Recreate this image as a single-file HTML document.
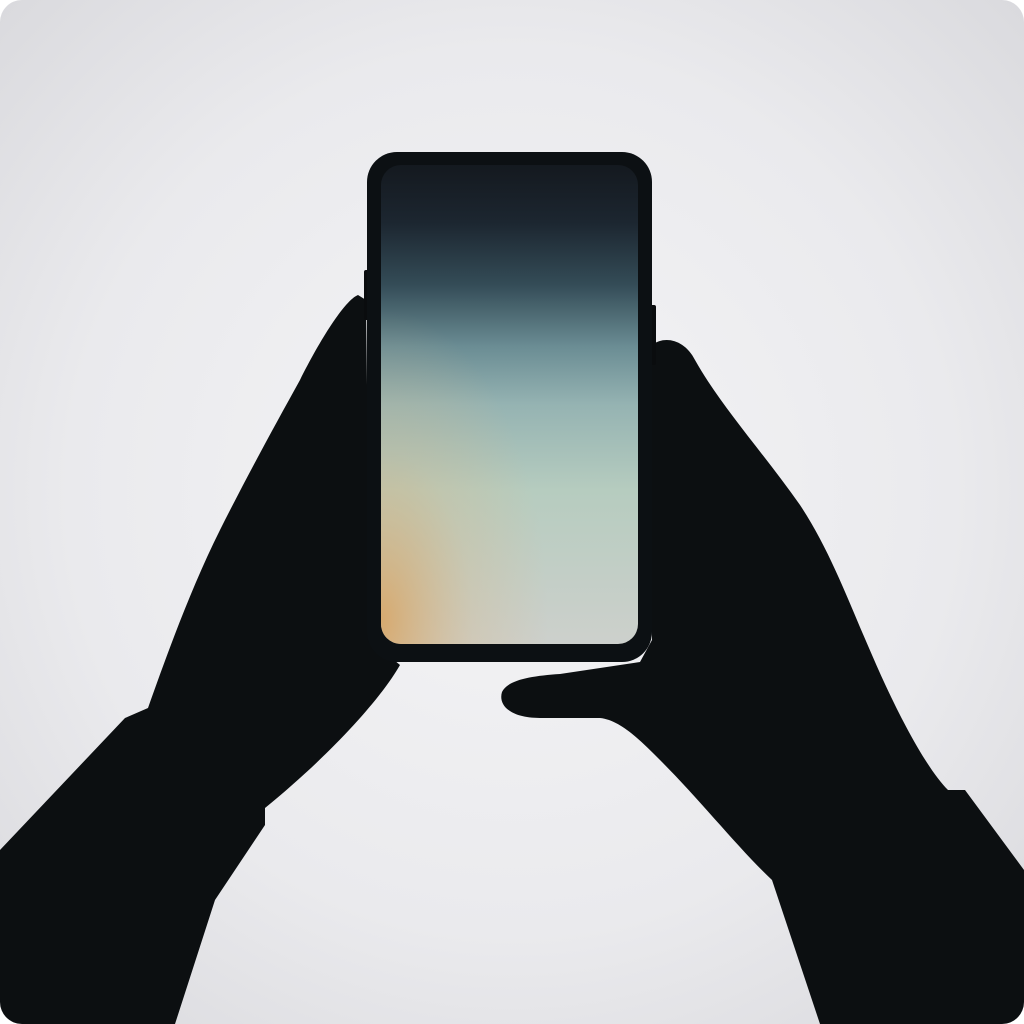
<!DOCTYPE html>
<html><head><meta charset="utf-8"><style>
html,body{margin:0;padding:0;background:#fff;}
svg{display:block}
</style></head><body>
<svg width="1024" height="1024" viewBox="0 0 1024 1024" xmlns="http://www.w3.org/2000/svg">
<defs>
<radialGradient id="bg" cx="50%" cy="48%" r="72%">
<stop offset="0" stop-color="#f4f4f6"/>
<stop offset="0.6" stop-color="#eaeaed"/>
<stop offset="1" stop-color="#d8d8dc"/>
</radialGradient>
<linearGradient id="scr" x1="0" y1="0" x2="0" y2="1">
<stop offset="0" stop-color="#14191f"/>
<stop offset="0.12" stop-color="#1c2630"/>
<stop offset="0.25" stop-color="#344c57"/>
<stop offset="0.38" stop-color="#6b8d94"/>
<stop offset="0.5" stop-color="#95b3b2"/>
<stop offset="0.68" stop-color="#b6ccbf"/>
<stop offset="1" stop-color="#cdd0cc"/>
</linearGradient>
<radialGradient id="warm" cx="0.0" cy="0.95" r="0.65">
<stop offset="0" stop-color="#d9a35f" stop-opacity="0.85"/>
<stop offset="0.55" stop-color="#d6b88a" stop-opacity="0.3"/>
<stop offset="1" stop-color="#d6b88a" stop-opacity="0"/>
</radialGradient>
<clipPath id="rc"><rect width="1024" height="1024" rx="22"/></clipPath>
</defs>
<g clip-path="url(#rc)">
<rect width="1024" height="1024" fill="url(#bg)"/>
<path fill="#0c0f11" d="M0,850 L125,718 L148,708 C165,660 190,590 220,530 C245,480 275,425 300,380 C320,340 345,300 358,295 L366,300 L370,640 L400,665 C380,700 330,755 265,808 L265,825 L215,900 L175,1024 L0,1024 Z"/>
<path fill="#0c0f11" d="M652,345 C665,335 685,340 695,360 C720,405 765,455 800,505 C830,550 850,605 872,655 C900,720 928,770 948,790 L965,790 L1024,870 L1024,1024 L820,1024 L772,880 C740,850 700,800 660,760 C640,740 620,720 600,718 L540,718 C510,718 498,705 502,692 C508,680 530,676 560,674 L640,662 L652,640 Z"/>
<rect x="364" y="270" width="6" height="50" rx="2" fill="#0a0c0e"/>
<rect x="650" y="305" width="6" height="60" rx="2" fill="#0a0c0e"/>
<rect x="367" y="152" width="285" height="510" rx="30" fill="#0c1013"/>
<rect x="381" y="165" width="257" height="479" rx="20" fill="url(#scr)"/>
<rect x="381" y="165" width="257" height="479" rx="20" fill="url(#warm)"/>
</g>
</svg>
</body></html>
